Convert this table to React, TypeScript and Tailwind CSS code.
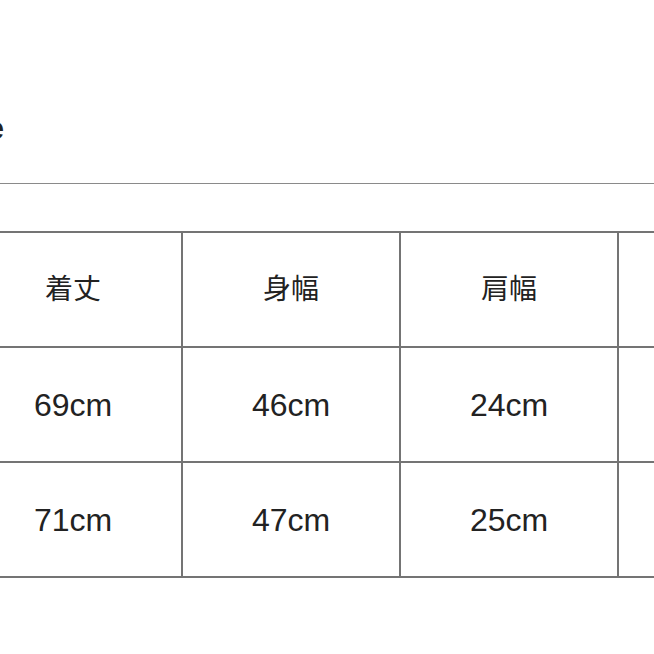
const headers = ['着丈', '身幅', '肩幅', '']
const rows = [
  ['69cm', '46cm', '24cm', ''],
  ['71cm', '47cm', '25cm', ''],
]

export default function App() {
  return (
    <div className="w-[654px] h-[654px] overflow-hidden bg-white text-[#222]" style={{ fontFamily: '"Liberation Sans", "Noto Sans CJK JP", sans-serif' }}>
      <div className="h-[183px] pt-[112px]">
        <div className="-ml-[60px] text-[32px] leading-[32px] font-bold">Size</div>
      </div>
      <div className="h-px bg-[#8a8a8a]" />
      <div className="mt-[47px] -ml-[37px] w-[880px]">
        <div className="grid grid-cols-[216px_216px_216px_216px] gap-[2px] bg-[#747474] p-[2px]">
          {headers.map((h, i) => (
            <div key={`h${i}`} className="h-[113px] bg-white flex items-center justify-center text-[28px]">
              {h}
            </div>
          ))}
          {rows.map((r, ri) =>
            r.map((c, ci) => (
              <div key={`r${ri}-${ci}`} className="h-[113px] bg-white flex items-center justify-center text-[32px]">
                {c}
              </div>
            ))
          )}
        </div>
      </div>
    </div>
  )
}
